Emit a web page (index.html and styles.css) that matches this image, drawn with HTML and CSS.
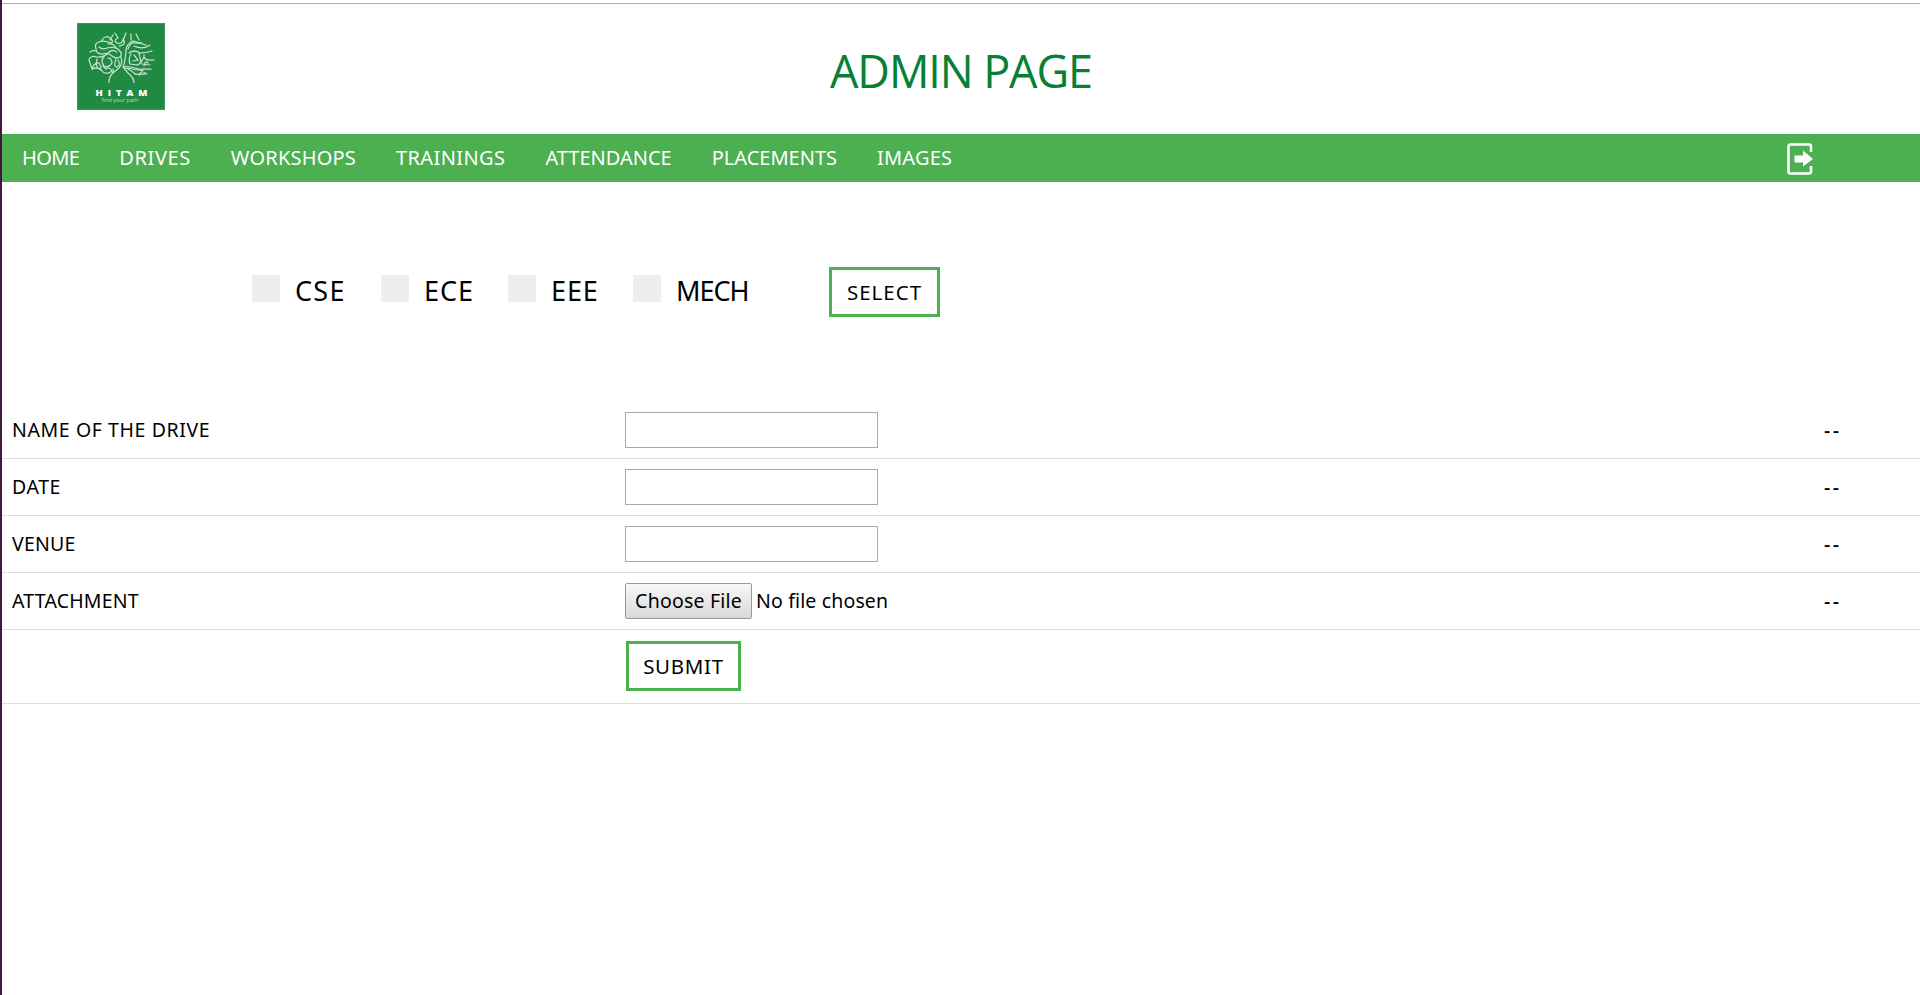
FILE: index.html
```html
<!DOCTYPE html>
<html lang="en">
<head>
<meta charset="utf-8">
<title>Admin Page</title>
<link rel="stylesheet" href="styles.css">
</head>
<body>
<div class="page">
  <header class="header">
    <svg class="logo" viewBox="0 0 88 87" role="img" aria-label="HITAM">
      <rect x=".5" y=".5" width="87" height="86" fill="#208942" stroke="#3a995a"/>
      <g class="tree">
        <path d="M32 59.500Q32 54 35 51Q37 48 36 46M57 59.500Q57 55 51 50L46 44Q48 39 49 28Q49 21 56 18L69 22M46 44Q53 46 58 51H68M47 43Q55 44 62 46L74 46"/>
        <path d="M25 17Q29 11 34 16Q37 19 34 20Q26 17 22 19Q17 20 19 26Q19 31 25 31Q31 29 35 33Q39 36 43 34Q46 31 42 27Q38 23 30 25Q25 27 22 24"/>
        <path d="M13 29Q15 27 19 28M12 37Q13 32 20 34Q27 35 32 29Q35 26 40 29M12 37L15 46Q17 39 22 40Q26 46 22 46Q18 43 20 36M15 46Q22 43 26 49Q31 52 35 48Q32 43 29 46L26 43"/>
        <path d="M27 34Q23 38 27 43Q32 45 35 40Q35 35 31 35M39 36Q36 44 40 44Q44 42 41 37M44 34Q46 40 42 45L36 50M33 17L36 12M38 10L41 15Q36 17 40 20Q45 22 47 15L49 10M42 23Q50 22 46 16M54 11V17M59 11L62 17M31 21Q37 20 39 25"/>
        <path d="M51 26Q54 18 58 20L65 20M52 30Q57 26 63 30Q69 30 75 28M57 23Q66 27 73 22M54 31Q51 36 53 41L61 42Q65 39 67 34M57 32L61 37L56 38M62 30L64 40M67 32Q66 37 73 37H77M67 43Q68 37 71 40M65 41L73 42M51 45Q58 47 63 47L70 51M62 52L66 47"/>
      </g>
      <text class="logo-name" x="18.500" y="72.500" textLength="52">HITAM</text>
      <text class="logo-tag" x="24.500" y="78.500" textLength="37" lengthAdjust="spacingAndGlyphs">find your path</text>
    </svg>
    <h1 class="title">ADMIN PAGE</h1>
  </header>
  <nav class="nav">
    <a class="tight">HOME</a><a class="wide">DRIVES</a><a class="loose">WORKSHOPS</a><a class="open">TRAININGS</a><a>ATTENDANCE</a><a>PLACEMENTS</a><a class="loose">IMAGES</a>
    <svg class="logout" viewBox="0 0 26 32">
      <path d="M24 9V3.500Q24 1.500 22 1.500H3.500Q1.500 1.500 1.500 3.500V28.500Q1.500 30.500 3.500 30.500H22Q24 30.500 24 28.500V23" fill="none" stroke="#fff" stroke-width="2.600"/>
      <path d="M7.500 12.500H16V7.500L26 16L16 23.500V19.500H7.500Z" fill="#fff"/>
    </svg>
  </nav>
  <section class="filters">
    <label class="check cse"><i></i>CSE</label>
    <label class="check ece"><i></i>ECE</label>
    <label class="check eee"><i></i>EEE</label>
    <label class="check mech"><i></i>MECH</label>
    <button class="btn select">SELECT</button>
  </section>
  <form class="form">
    <div class="row"><span class="wide">NAME OF THE DRIVE</span><input type="text"><span class="status">--</span></div>
    <div class="row"><span class="wide">DATE</span><input type="text"><span class="status">--</span></div>
    <div class="row"><span class="loose">VENUE</span><input type="text"><span class="status">--</span></div>
    <div class="row"><span class="loose">ATTACHMENT</span><div class="file"><button type="button" class="choose">Choose File</button><span>No file chosen</span></div><span class="status">--</span></div>
    <div class="row last"><span></span><button type="button" class="btn submit">SUBMIT</button></div>
  </form>
</div>
</body>
</html>
```

FILE: styles.css
```css
* { box-sizing: border-box; }
body {
  margin: 0;
  background: #fff;
  color: #000;
  font: 19.500px/26px "Noto Sans", sans-serif;
}
.page {
  height: 995px;
  border-left: 2px solid #42163f;
  padding-top: 3px;
  overflow: hidden;
}
.tight { letter-spacing: -.6px; }
.loose { letter-spacing: .2px; }
.open { letter-spacing: .4px; }
.wide { letter-spacing: .6px; }
.header {
  display: grid;
  grid-template-columns: 1fr auto 1fr;
  height: 131px;
  border-top: 1px solid #b0aeb0;
}
.logo { width: 88px; height: 87px; margin: 19px 0 0 75px; }
.tree { fill: none; stroke: #c5e2ce; stroke-width: 1.250; stroke-linecap: round; }
.logo-name { font: 800 9.500px "Open Sans", sans-serif; fill: #fff; }
.logo-tag { font: 6px "Open Sans", sans-serif; fill: #b9dcc4; }
.title {
  margin: 37px 0 0;
  font: 400 45px/60px "Open Sans", sans-serif;
  letter-spacing: -1.100px;
  color: #078036;
}
.nav {
  display: flex;
  height: 48px;
  padding-top: 11px;
  background: #4caf50;
  color: #fff;
}
.nav a { padding: 0 20px; font-size: 20px; }
.logout { width: 26px; height: 32px; margin: -2px 107px 0 auto; }
.filters {
  display: flex;
  height: 220px;
  padding: 85px 0 0 250px;
}
.check {
  display: flex;
  gap: 15px;
  height: 40px;
  margin-top: 4px;
  font-size: 27px;
  line-height: 40px;
  letter-spacing: .9px;
}
.check i { width: 28px; height: 27px; margin-top: 4px; background: #eee; }
.cse { width: 129px; letter-spacing: 1.300px; }
.ece { width: 127px; }
.eee { width: 125px; }
.mech { width: 196px; letter-spacing: -1px; }
.btn {
  height: 50px;
  padding: 0;
  border: 3px solid #4caf50;
  background: #fff;
  color: #000;
  font: 20.500px/40px "Noto Sans", sans-serif;
}
.select { width: 111px; letter-spacing: 1px; }
.submit { width: 115px; margin: 11px 0 0 1px; align-self: start; letter-spacing: .7px; }
.row {
  display: grid;
  grid-template-columns: 613px 1199px 1fr;
  align-items: center;
  height: 57px;
  padding: 0 10px;
  border-bottom: 1px solid #ddd;
}
.row.last { height: 74px; }
.row input {
  width: 253px;
  height: 36px;
  border: 1px solid #a9a9a9;
  background: #fff;
}
.status { font-weight: 500; letter-spacing: 2.500px; }
.file { display: flex; gap: 4px; align-items: center; letter-spacing: .15px; }
.choose {
  width: 127px;
  height: 36px;
  padding: 0;
  border: 1px solid #999;
  border-radius: 2px;
  background: linear-gradient(#f7f7f7, #dadada);
  color: #000;
  font: inherit;
  letter-spacing: .2px;
}
```
